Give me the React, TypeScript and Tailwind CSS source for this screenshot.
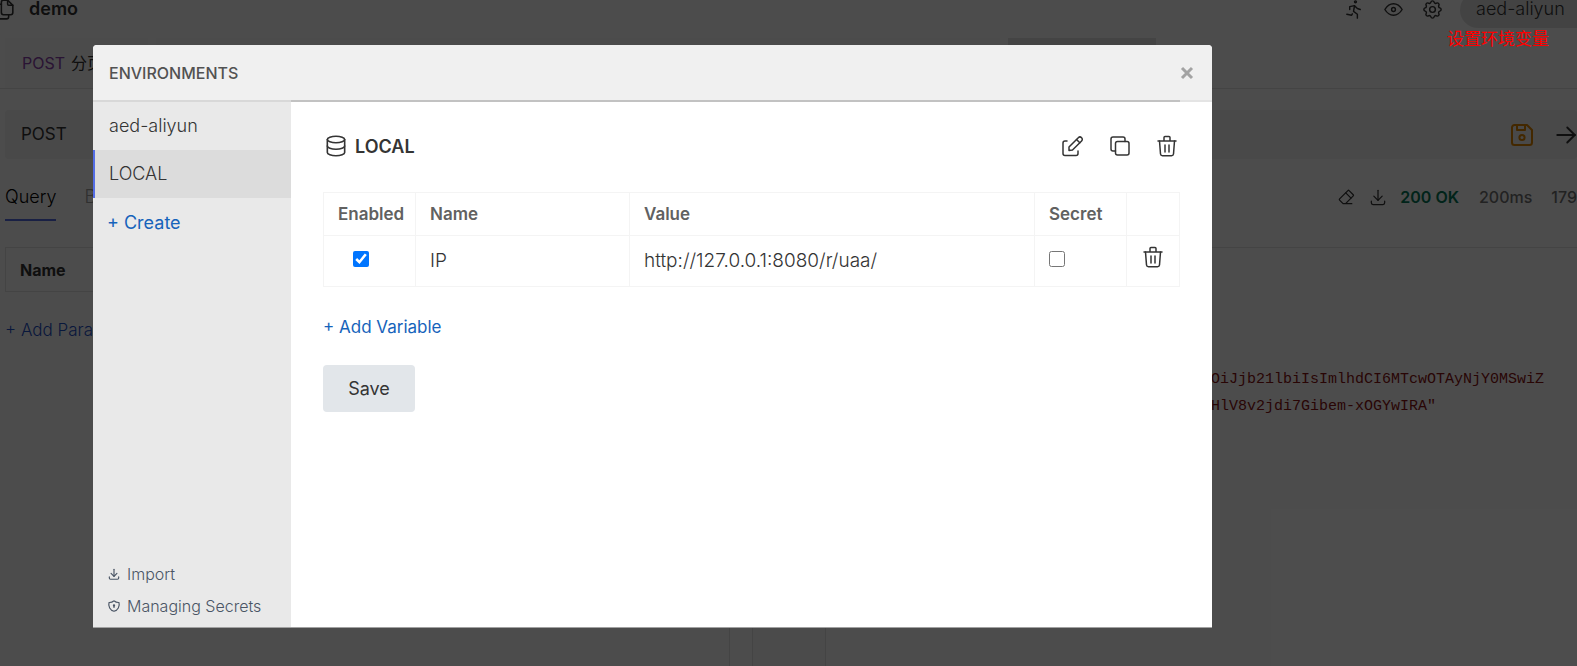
import React, { useState } from 'react';
import {
  TbArrowRight, TbDatabase, TbDownload, TbEraser, TbEye, TbFiles, TbRun, TbSettings, TbShieldLock,
} from 'react-icons/tb';

const environments = ['aed-aliyun', 'LOCAL'];

const Icon: React.FC<{ className?: string; children: React.ReactNode }> = ({ className, children }) => (
  <svg
    className={className}
    width="26"
    height="26"
    viewBox="0 0 26 26"
    fill="none"
    stroke="currentColor"
    strokeWidth="1.5"
    strokeLinecap="round"
    strokeLinejoin="round"
  >
    {children}
  </svg>
);

const EditIcon = () => (
  <Icon>
    <path d="M7 8H5a2 2 0 0 0-2 2v10.500a2 2 0 0 0 2 2h11a2 2 0 0 0 2-2V18" />
    <path d="M9 17.500v-3.500l9.300-9.300a2.200 2.200 0 0 1 3.300 3.300L12.500 17z" />
    <path d="M16.500 6.500l3.300 3.300" />
  </Icon>
);

const CopyIcon = () => (
  <Icon>
    <rect x="8.5" y="8.5" width="13.5" height="13.5" rx="2" />
    <path d="M8.500 18H6a2 2 0 0 1-2-2V6a2 2 0 0 1 2-2h10a2 2 0 0 1 2 2v2.500" />
  </Icon>
);

const TrashIcon = () => (
  <Icon>
    <path d="M4 8h18M10 8V4.500a1 1 0 0 1 1-1h4a1 1 0 0 1 1 1V8" />
    <path d="M5.500 8l1 13a2 2 0 0 0 2 1.800h9a2 2 0 0 0 2-1.800l1-13M11 12v7M15 12v7" />
  </Icon>
);

const SaveIcon: React.FC<{ className?: string }> = ({ className }) => (
  <Icon className={className}>
    <g strokeWidth="2">
      <path d="M5.500 3h12.500l5 5v12.500a2.500 2.500 0 0 1-2.500 2.500h-15a2.500 2.500 0 0 1-2.500-2.500v-15A2.500 2.500 0 0 1 5.500 3z" />
      <path d="M8 3v5h8V3" />
      <circle cx="13" cy="15.5" r="2.6" />
    </g>
  </Icon>
);

// Request and response panes under the dialog
const Workspace: React.FC = () => (
  <div className="min-h-screen bg-white text-[#343434] overflow-hidden flex flex-col text-lg">
    <header className="h-7 flex items-end shrink-0">
      <div className="flex items-center gap-3 h-9 -ml-2 pb-0.5">
        <TbFiles size={25} strokeWidth={1.5} />
        <span className="font-semibold leading-4">demo</span>
      </div>
      <div className="ml-auto flex items-center h-9">
        <div className="flex gap-4 pb-0.5 pr-4">
          <TbRun size={23} strokeWidth={1.5} />
          <TbEye size={23} strokeWidth={1.5} />
          <TbSettings size={23} strokeWidth={1.5} />
        </div>
        <div className="h-9 w-[117px] rounded-l-full bg-[#e2e2e2] pl-4 pb-0.5 flex items-center font-light leading-4">aed-aliyun</div>
      </div>
    </header>

    <div className="mt-2.5 h-[51px] shrink-0 border-b border-neutral-200 flex gap-2 pl-[5px]">
      <div className="w-[143px] bg-neutral-50 pl-[17px] flex items-center whitespace-nowrap gap-1.5 text-base">
        <span className="text-[#8e44ad]">POST</span> 分页
      </div>
      <div className="flex-1 bg-neutral-50" />
      <div className="w-[148px] bg-neutral-200 mr-[421px]" />
    </div>

    <div className="mt-[21px] ml-[5px] h-[49px] shrink-0 bg-[#f3f3f3] rounded flex items-center pl-4">
      <span className="text-[17px]">POST</span>
      <SaveIcon className="ml-auto text-[#e08600]" />
      <TbArrowRight size={30} strokeWidth={1.5} className="ml-4 -mr-1" />
    </div>

    <div className="grow flex">
      <div className="w-[730px] border-r border-neutral-200 pl-[5px]">
        <div className="flex gap-7 pt-5 text-lg">
          <span className="h-[42px] pt-1 border-b-2 border-[#546de5] text-black font-light">Query</span>
          <span className="pt-1 text-neutral-400 font-light">Body</span>
        </div>
        <table className="w-full mt-[26px] text-base font-semibold">
          <thead>
            <tr><th className="border border-neutral-200 h-11 pl-3.5 text-left">Name</th></tr>
          </thead>
        </table>
        <button className="mt-[25px] text-[#1e50c8] text-[17px] font-light">+ Add Param</button>
      </div>
      <div className="ml-[22px] w-[74px] border-x border-neutral-200 bg-neutral-50" />
      <div className="grow -ml-[74px] flex flex-col items-end min-w-0">
        <div className="w-full h-[89px] border-b border-neutral-200 flex items-center justify-end pb-3 text-base whitespace-nowrap">
          <TbEraser size={20} strokeWidth={1.5} />
          <TbDownload size={20} strokeWidth={1.5} className="ml-3" />
          <span className="ml-3 font-semibold text-[#047857]">200 OK</span>
          <span className="ml-5 font-medium text-neutral-500">200ms</span>
          <span className="ml-[19px] font-medium text-neutral-500">179</span>
        </div>
        <pre className="w-[366px] mt-[118px] font-['Liberation_Mono',monospace] text-[15px] leading-[27px] text-[#8a1111]">{`OiJjb21lbiIsImlhdCI6MTcwOTAyNjY0MSwiZ\nHlV8v2jdi7Gibem-xOGYwIRA"`}</pre>
      </div>
    </div>
  </div>
);

export default function App() {
  const [selected, setSelected] = useState('LOCAL');
  const [enabled, setEnabled] = useState(true);
  const [secret, setSecret] = useState(false);

  return (
    <div className="relative font-[Inter,'Noto_Sans_CJK_SC',sans-serif] overflow-hidden h-screen">
      <Workspace />

      {/* Backdrop */}
      <div className="absolute inset-0 bg-black/70 pl-[93px] pr-[365px] pt-[45px] pb-[38px]">
        <div role="dialog" aria-label="Environments" className="h-full rounded-t overflow-hidden bg-white border-b border-neutral-400 flex flex-col text-[#343434]">
          <div className="h-[55px] shrink-0 bg-[#f0f0f0] flex items-center justify-between px-4 text-[#525252]">
            <h1 className="text-base font-medium">ENVIRONMENTS</h1>
            <button aria-label="Close" className="text-[#a3a3a3]">
              <svg width="18" height="18" viewBox="0 0 18 18" stroke="currentColor" strokeWidth="3">
                <path d="M4 4l10 10M14 4L4 14" />
              </svg>
            </button>
          </div>

          <div className="grow flex min-h-0">
            <aside className="w-[198px] shrink-0 bg-[#e9e9e9] border-t-2 border-[#d8d8d8] flex flex-col">
              {environments.map((env) => (
                <button
                  key={env}
                  onClick={() => setSelected(env)}
                  className={`h-12 shrink-0 text-left text-lg font-light border-l-2 pl-3.5 ${
                    selected === env ? 'bg-[#dcdcdc] border-[#546de5]' : 'border-transparent'
                  }`}
                >
                  {env}
                </button>
              ))}
              <button className="h-[50px] text-left pl-3.5 text-lg text-[#1663bb]">+ Create</button>
              <div className="mt-auto pl-3.5 pb-[5px] text-base text-gray-600 font-light">
                <button className="h-8 flex items-center gap-1.5"><TbDownload size={14} strokeWidth={2} />Import</button>
                <button className="h-8 flex items-center gap-1.5"><TbShieldLock size={14} strokeWidth={2} />Managing Secrets</button>
              </div>
            </aside>

            <main className="grow min-w-0 flex flex-col">
              <div className="h-0.5 bg-[#e4e4e4] shrink-0 pr-8">
                <div className="h-full bg-[#c2c2c2]" />
              </div>
              <div className="px-8 pt-[30px]">
                <div className="flex items-center h-7">
                  <TbDatabase size={26} strokeWidth={1.5} />
                  <h2 className="ml-1.5 pt-0.5 text-lg font-semibold">LOCAL</h2>
                  <div className="ml-auto flex gap-[21px]">
                    <button aria-label="Rename"><EditIcon /></button>
                    <button aria-label="Copy"><CopyIcon /></button>
                    <button aria-label="Delete"><TrashIcon /></button>
                  </div>
                </div>

                <table className="w-full mt-8 table-fixed border-collapse text-left">
                  <colgroup>
                    <col className="w-[92px]" />
                    <col className="w-[25%]" />
                    <col />
                    <col className="w-[92px]" />
                    <col className="w-[53px]" />
                  </colgroup>
                  <thead className="text-[17px] text-[#616161]">
                    <tr className="h-[43px]">
                      <th className="border border-[#f4f4f4] pl-3.5 pt-0.5 font-semibold">Enabled</th>
                      <th className="border border-[#f4f4f4] pl-3.5 pt-0.5 font-semibold">Name</th>
                      <th className="border border-[#f4f4f4] pl-3.5 pt-0.5 font-semibold">Value</th>
                      <th className="border border-[#f4f4f4] pl-3.5 pt-0.5 font-semibold">Secret</th>
                      <th className="border border-[#f4f4f4]" />
                    </tr>
                  </thead>
                  <tbody className="text-[19px] font-light">
                    <tr className="h-[51px]">
                      <td className="border border-[#f4f4f4] pl-[29px]">
                        <input type="checkbox" aria-label="Enabled" className="block size-4 mb-1" checked={enabled} onChange={(e) => setEnabled(e.target.checked)} />
                      </td>
                      <td className="border border-[#f4f4f4] pl-3.5"><input aria-label="Name" className="w-full outline-none" defaultValue="IP" /></td>
                      <td className="border border-[#f4f4f4] pl-3.5"><input aria-label="Value" className="w-full outline-none" defaultValue="http://127.0.0.1:8080/r/uaa/" /></td>
                      <td className="border border-[#f4f4f4] pl-3.5">
                        <input type="checkbox" aria-label="Secret" className="block size-4 mb-1" checked={secret} onChange={(e) => setSecret(e.target.checked)} />
                      </td>
                      <td className="border border-[#f4f4f4]">
                        <button aria-label="Delete variable" className="block mx-auto mb-2"><TrashIcon /></button>
                      </td>
                    </tr>
                  </tbody>
                </table>

                <button className="block mt-[26px] text-[17px] leading-7 text-[#1663bb]">+ Add Variable</button>
                <button className="block mt-6 h-[47px] w-[92px] rounded bg-[#e2e6ea] text-lg">Save</button>
              </div>
            </main>
          </div>
        </div>
      </div>

      {/* Note pinned below the environment selector */}
      <div className="absolute right-7 top-[26px] text-[17px] leading-6 text-[#ff0000] font-['Noto_Sans_CJK_SC',sans-serif]">设置环境变量</div>
    </div>
  );
}
